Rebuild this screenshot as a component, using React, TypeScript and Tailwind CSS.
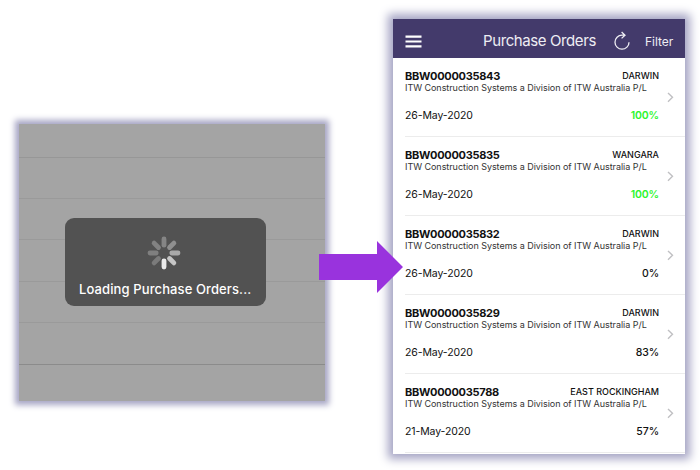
import React from 'react';

interface Order {
    number: string;
    site: string;
    date: string;
    percent: number;
}

const supplier = 'ITW Construction Systems a Division of ITW Australia P/L';

const orders: Order[] = [
    { number: 'BBW0000035843', site: 'DARWIN', date: '26-May-2020', percent: 100 },
    { number: 'BBW0000035835', site: 'WANGARA', date: '26-May-2020', percent: 100 },
    { number: 'BBW0000035832', site: 'DARWIN', date: '26-May-2020', percent: 0 },
    { number: 'BBW0000035829', site: 'DARWIN', date: '26-May-2020', percent: 83 },
    { number: 'BBW0000035788', site: 'EAST ROCKINGHAM', date: '21-May-2020', percent: 57 },
];

// clockwise from the top, brightest spoke at the bottom
const spokes = ['#858585', '#8f8f8f', '#a9a9a9', '#c6c6c6', '#ebebeb', '#7b7b7b', '#7f7f7f', '#828282'];

function Spinner() {
    return (
        <svg width="34" height="34" viewBox="-17 -17 34 34" className="ml-[82.4px]">
            {spokes.map((color, i) => (
                <line
                    key={i}
                    x1="0"
                    y1="-7.8"
                    x2="0"
                    y2="-14"
                    stroke={color}
                    strokeWidth="4.8"
                    strokeLinecap="round"
                    transform={`rotate(${i * 45})`}
                />
            ))}
        </svg>
    );
}

function LoadingPanel() {
    return (
        <div className="relative mt-[124px] ml-[19px] h-[277px] w-[306px] shrink-0 bg-[#a4a4a4] shadow-[0_0_6px_4px_#a7a6c5]">
            <div className="h-[34px] border-b border-[#979797]" />
            <div className="h-[41px] border-b border-[#9a9a9a]" />
            <div className="h-[41px] border-b border-[#9a9a9a]" />
            <div className="h-[42px] border-b border-[#9a9a9a]" />
            <div className="h-[41px] border-b border-[#9a9a9a]" />
            <div className="h-[42px] border-b border-[#8b8b8b]" />
            <div className="absolute top-[94px] left-[46px] h-[88px] w-[201px] rounded-[9px] bg-[#525252] pt-[18px]">
                <Spinner />
                <p className="mt-[10px] ml-[14px] text-[13px] leading-[18px] font-medium tracking-[0.11px] whitespace-nowrap text-white">
                    Loading Purchase Orders...
                </p>
            </div>
        </div>
    );
}

function OrderRow({ order }: { order: Order }) {
    return (
        <div className="flex h-[79px] border-b border-[#ececec] text-[#111]">
            <div className="w-[254px] pt-[11px] whitespace-nowrap">
                <div className="flex h-[13px] items-center justify-between">
                    <span className="mt-px text-[11px] font-bold tracking-[-0.3px]">{order.number}</span>
                    <span className="mt-px text-[9px] font-medium">{order.site}</span>
                </div>
                <div className="h-3 text-[9px] leading-3 tracking-[-0.04px] text-[#333]">{supplier}</div>
                <div className="mt-[14px] flex h-4 items-center justify-between">
                    <span className="text-[10.5px] tracking-[-0.1px]">{order.date}</span>
                    <span
                        className={
                            order.percent === 100
                                ? 'text-[10.5px] font-semibold tracking-[-0.15px] text-[#2bf52b]'
                                : 'text-[10.5px] font-medium tracking-[-0.1px]'
                        }
                    >
                        {order.percent}%
                    </span>
                </div>
            </div>
            <svg width="8" height="12" viewBox="0 0 8 12" className="mt-[33px] ml-2" fill="none" stroke="#c0c0c3" strokeWidth="1.4">
                <path d="M1 1.9L5.5 6.3L1 10.7" />
            </svg>
        </div>
    );
}

function OrdersPanel() {
    return (
        <div className="mt-[19px] ml-[68px] h-[435px] w-[292px] shrink-0 bg-white shadow-[0_0_9px_5px_#a5a4c4]">
            <div className="flex h-[39px] items-center bg-[#433a6b] text-[#eeedf3]">
                <svg width="17" height="13" viewBox="0 0 17 13" className="mt-[5px] ml-3" stroke="#fff" strokeWidth="2.2">
                    <path d="M.5 1.7h16M.5 6.5h16M.5 11.3h16" />
                </svg>
                <h1 className="mt-[5px] ml-[61px] w-[114px] text-[15px] leading-5 tracking-[-0.4px] whitespace-nowrap">Purchase Orders</h1>
                <svg width="17" height="20" viewBox="0 0 17 20" className="mt-[4px] ml-[16px]" fill="none" stroke="#eeedf3" strokeWidth="1.3">
                    <path d="M11.8 4.2H9A7 7 0 1 0 16 11.2M8.6 1L12 4.2L8.6 7.4" />
                </svg>
                <span className="mt-[6px] ml-[15px] text-xs tracking-[-0.05px]">Filter</span>
            </div>
            <div className="pl-3">
                {orders.map(order => (
                    <OrderRow key={order.number} order={order} />
                ))}
            </div>
        </div>
    );
}

export default function App() {
    return (
        <div className="relative flex h-[470px] w-[700px] overflow-hidden bg-white font-['Inter',sans-serif]">
            <LoadingPanel />
            <OrdersPanel />
            <svg width="84" height="52" viewBox="0 0 84 52" className="absolute top-[241px] left-[319px]" fill="#9933dd">
                <path d="M0 13H58V0L84 26L58 52V39H0Z" />
            </svg>
        </div>
    );
}
